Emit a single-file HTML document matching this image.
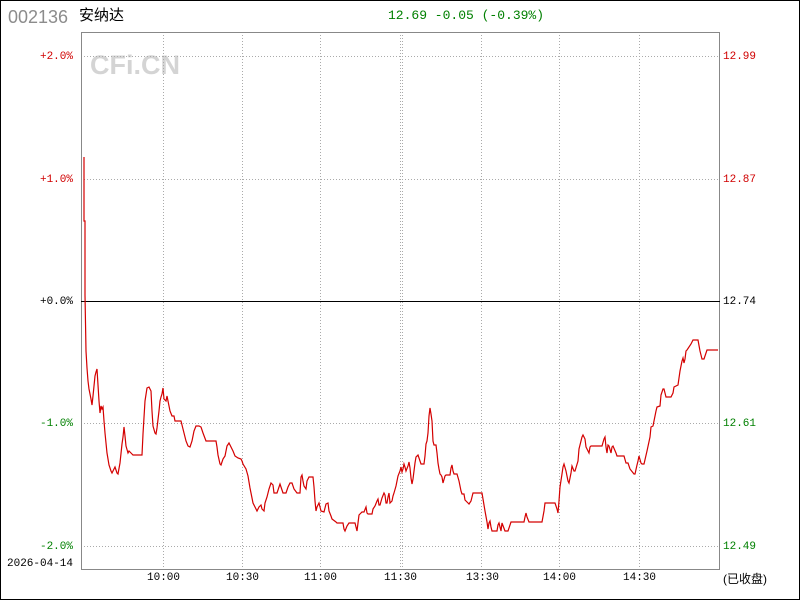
<!DOCTYPE html>
<html><head><meta charset="utf-8"><style>
html,body{margin:0;padding:0;background:#fff;}
#f{position:relative;width:798px;height:598px;border:1px solid #000;overflow:hidden;font-family:"Liberation Mono","Noto Sans CJK SC",monospace;}
.t{position:absolute;white-space:nowrap;font-size:11px;line-height:12px;}
.l{text-align:right;width:70px;left:2px;}
</style></head><body><div id="f">
<div class="t" style="left:7px;top:5px;font-family:'Liberation Sans',sans-serif;font-size:18px;line-height:22px;color:#8c8c8c;">002136</div>
<div class="t" style="left:78px;top:5px;font-family:'Liberation Sans','Noto Sans CJK SC',sans-serif;font-size:15px;line-height:20px;color:#000;">安纳达</div>
<div class="t" style="left:387px;top:7px;font-size:13px;line-height:16px;color:#008000;">12.69 -0.05 (-0.39%)</div>
<div class="t" style="left:89px;top:49px;font-family:'Liberation Sans',sans-serif;font-weight:bold;font-size:27px;line-height:30px;color:#d4d4d4;">CFi.CN</div>
<svg style="position:absolute;left:0;top:0" width="800" height="600">
<g stroke="#aaa" stroke-dasharray="1,2" stroke-width="1">
<line x1="80" y1="55.5" x2="719" y2="55.5"/><line x1="80" y1="178.5" x2="719" y2="178.5"/>
<line x1="80" y1="422.5" x2="719" y2="422.5"/><line x1="80" y1="545.5" x2="719" y2="545.5"/>
<line x1="162.5" y1="31" x2="162.5" y2="569"/><line x1="241.5" y1="31" x2="241.5" y2="569"/>
<line x1="319.5" y1="31" x2="319.5" y2="569"/><line x1="399.5" y1="31" x2="399.5" y2="569"/>
<line x1="401.5" y1="31" x2="401.5" y2="569"/><line x1="480.5" y1="31" x2="480.5" y2="569"/>
<line x1="558.5" y1="31" x2="558.5" y2="569"/><line x1="638.5" y1="31" x2="638.5" y2="569"/>
</g>
<rect x="80.5" y="31.5" width="638" height="537" fill="none" stroke="#888"/>
<line x1="80" y1="300.5" x2="719" y2="300.5" stroke="#000"/>
<polyline fill="none" stroke="#d40000" stroke-width="1.2" points="83,156 83,220 84,220 84,294 85,350 86,367 87,380 88,388 89,393 90,398 91,404 92,395 93,385 94,375 95,371 96,368 97,384 98,400 99,412 100,405 101,408 102,406 103,420 104,432 106,452 108,464 110,470 111,472 113,468 114,466 116,472 117,473 119,462 121,443 122,436 123,426 124,435 125,445 127,452 128,450 130,452 132,454 141,454 142,433 144,400 146,387 148,386 150,390 151,410 152,425 154,432 155,433 156,427 158,410 159,400 160,396 161,393 162,387 163,398 165,400 166,395 167,400 169,410 171,415 173,415 174,420 180,420 182,428 185,440 187,445 189,446 191,440 193,430 195,425 198,425 200,426 202,432 205,440 215,440 216,446 217,454 219,463 220,464 222,458 224,455 226,445 228,442 230,446 232,450 234,455 237,457 240,458 241,460 242,463 245,468 247,475 249,487 250,492 252,502 254,506 256,510 258,506 260,504 261,508 263,510 264,502 266,496 268,488 270,482 272,484 273,492 276,492 278,486 279,483 280,486 282,492 285,492 287,486 289,482 291,482 293,488 296,492 299,492 300,476 301,474 302,480 303,485 305,488 306,480 308,476 312,476 313,486 314,500 315,510 316,506 318,502 319,506 320,510 323,511 325,503 327,502 328,510 330,515 331,518 335,521 336,522 342,522 343,528 344,530 346,525 348,522 354,522 355,526 356,530 357,522 358,514 361,511 363,511 365,506 366,512 367,513 371,513 372,508 374,505 376,500 377,498 378,504 379,504 381,497 383,492 384,494 385,502 386,502 387,496 388,492 389,502 391,500 392,495 393,492 395,485 397,475 399,470 400,466 401,471 402,468 403,463 404,466 405,470 407,465 408,461 409,467 410,477 411,483 412,478 413,470 414,462 415,456 417,454 419,460 420,463 423,463 424,455 425,443 426,440 427,432 428,415 429,407 430,413 431,420 432,440 433,444 435,444 436,452 437,462 438,468 439,473 440,474 441,476 442,482 444,475 445,474 449,474 450,467 451,464 452,470 453,473 456,473 458,480 460,490 461,493 463,493 464,499 467,502 468,503 470,500 472,492 481,492 482,498 484,510 486,521 487,528 488,522 489,520 490,526 491,530 496,530 497,524 498,522 499,526 500,530 501,522 504,530 507,530 510,521 523,521 524,516 525,512 526,516 528,521 541,521 543,510 544,502 554,502 556,508 557,512 558,500 559,486 561,473 562,466 563,463 565,470 567,480 568,482 570,472 571,465 573,470 574,470 577,460 578,448 581,436 582,434 584,438 585,446 587,450 588,452 589,446 590,445 601,445 603,438 604,436 605,446 606,452 607,444 608,445 610,452 611,446 612,445 615,452 616,455 623,455 625,462 627,462 629,468 633,473 634,473 636,464 637,460 638,455 640,462 641,463 643,463 646,450 649,436 650,426 652,425 655,410 656,406 659,405 660,394 662,388 663,388 665,396 670,396 672,392 673,386 677,384 679,370 681,360 682,357 683,362 684,358 685,350 686,349 690,343 692,339 697,339 699,350 701,358 703,358 705,352 706,349 717,349"/>
</svg>
<div class="t l" style="top:50px;color:#d00000;">+2.0%</div>
<div class="t l" style="top:173px;color:#d00000;">+1.0%</div>
<div class="t l" style="top:295px;color:#000;">+0.0%</div>
<div class="t l" style="top:417px;color:#008000;">-1.0%</div>
<div class="t l" style="top:540px;color:#008000;">-2.0%</div>
<div class="t" style="left:722px;top:50px;color:#d00000;">12.99</div>
<div class="t" style="left:722px;top:173px;color:#d00000;">12.87</div>
<div class="t" style="left:722px;top:295px;color:#000;">12.74</div>
<div class="t" style="left:722px;top:417px;color:#008000;">12.61</div>
<div class="t" style="left:722px;top:540px;color:#008000;">12.49</div>
<div class="t" style="left:6px;top:557px;color:#000;">2026-04-14</div>
<div class="t" style="left:146px;top:571px;color:#000;">10:00</div>
<div class="t" style="left:225px;top:571px;color:#000;">10:30</div>
<div class="t" style="left:303px;top:571px;color:#000;">11:00</div>
<div class="t" style="left:383px;top:571px;color:#000;">11:30</div>
<div class="t" style="left:465px;top:571px;color:#000;">13:30</div>
<div class="t" style="left:542px;top:571px;color:#000;">14:00</div>
<div class="t" style="left:622px;top:571px;color:#000;">14:30</div>
<div class="t" style="left:722px;top:572px;color:#000;font-family:'Liberation Sans','Noto Sans CJK SC',sans-serif;font-size:12px;">(已收盘)</div>
</div></body></html>
